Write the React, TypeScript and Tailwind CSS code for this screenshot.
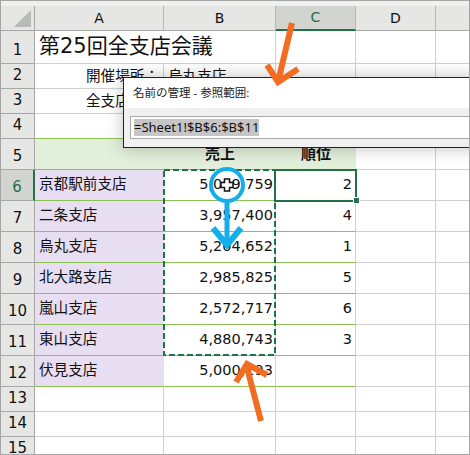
const rowHeights = [33, 25, 25, 25, 31, 31, 31, 31, 31, 31, 31, 31, 25, 25, 25];

const cells: Record<number, { a?: string; b?: string; c?: string }> = {
  6: { a: "京都駅前支店", b: "5,009,759", c: "2" },
  7: { a: "二条支店", b: "3,957,400", c: "4" },
  8: { a: "烏丸支店", b: "5,204,652", c: "1" },
  9: { a: "北大路支店", b: "2,985,825", c: "5" },
  10: { a: "嵐山支店", b: "2,572,717", c: "6" },
  11: { a: "東山支店", b: "4,880,743", c: "3" },
  12: { a: "伏見支店", b: "5,000,193" },
};

function ColHead({ label, active, w }: { label: string; active?: boolean; w: string }) {
  return (
    <div
      className={`${w} h-[25px] shrink-0 flex items-center justify-center border-r border-[#b5b7b5] text-[14px] ${
        active ? "bg-[#d2d4d0] text-[#1f6f4a] border-b-[2px] border-b-[#217346]" : "bg-[#e6e7e5] border-b border-b-[#a6a8a6]"
      }`}
    >
      {label}
    </div>
  );
}

function Row({ n }: { n: number }) {
  const h = rowHeights[n - 1];
  const data = cells[n];
  const rowBorder = n >= 4 && n <= 12 ? "border-b-[#8cc152]" : "border-b-[#d0d0d0]";
  const numCell = "flex items-end justify-center pb-[2px] border-r border-[#a6a8a6] border-b border-b-[#a6a8a6] text-[15px] w-[34px] shrink-0";
  const selectedRow = n === 6;

  if (n === 5) {
    return (
      <div className="flex" style={{ height: h }}>
        <div className={`${numCell} bg-[#e6e7e5]`}>5</div>
        <div className="w-[129px] shrink-0 border-b border-b-[#8cc152] bg-[#e2efda]" />
        <div className="w-[112px] shrink-0 border-b border-b-[#8cc152] bg-[#e2efda] flex items-center justify-center text-[15px] font-bold">
          売上
        </div>
        <div className="w-[80px] shrink-0 border-b border-b-[#8cc152] bg-[#e2efda] flex items-center justify-center text-[15px] font-bold">
          順位
        </div>
        <div className="w-[80px] shrink-0 border-r border-b border-[#d0d0d0]" />
        <div className="flex-1 border-b border-[#d0d0d0]" />
      </div>
    );
  }

  return (
    <div className="flex" style={{ height: h }}>
      <div className={`${numCell} ${selectedRow ? "bg-[#d2d4d0] text-[#1f6f4a] border-r-[2px] border-r-[#217346]" : "bg-[#e6e7e5]"}`}>{n}</div>
      {n === 1 ? (
        <div className={`w-[129px] shrink-0 border-b ${rowBorder} relative`}>
          <span className="absolute left-[4px] top-[-1px] text-[21px] whitespace-nowrap leading-[32px]">第25回全支店会議</span>
        </div>
      ) : n === 2 || n === 3 ? (
        <div className={`w-[129px] shrink-0 border-r border-[#d0d0d0] border-b ${rowBorder} flex items-center justify-end pr-[4px] text-[14.6px] whitespace-nowrap`}>
          {n === 2 ? "開催場所：" : "全支店数："}
        </div>
      ) : (
        <div className={`w-[129px] shrink-0 border-r border-b ${rowBorder} flex items-center pl-[4px] pb-[2px] text-[14.6px] whitespace-nowrap ${data?.a ? "bg-[#e8def2] border-r-[#e8def2]" : "border-r-[#d0d0d0]"}`}>
          {data?.a}
        </div>
      )}
      <div className={`w-[112px] shrink-0 border-r border-r-[#d0d0d0] border-b ${rowBorder} flex items-center justify-end pr-[2px] text-[14.5px]`}>
        {n === 2 ? <span className="w-full pl-[4px] text-[14.6px]">烏丸支店</span> : data?.b}
      </div>
      <div className={`w-[80px] shrink-0 border-r border-r-[#d0d0d0] border-b ${rowBorder} flex items-center justify-end pr-[3px] text-[14.5px]`}>
        {data?.c}
      </div>
      <div className="w-[80px] shrink-0 border-r border-r-[#d0d0d0] border-b border-b-[#d0d0d0]" />
      <div className="flex-1 border-b border-b-[#d0d0d0]" />
    </div>
  );
}

export default function App() {
  return (
    <div
      className="relative w-[470px] h-[455px] overflow-hidden bg-white text-[#111] border border-[#a6a6a6]"
      style={{ fontFamily: '"DejaVu Sans", "Noto Sans CJK JP", sans-serif' }}
    >
      <div className="h-[5px] bg-[#f0f1ef]" />
      <div className="flex">
        <div className="w-[34px] h-[25px] shrink-0 bg-[#e6e7e5] border-r border-b border-[#a6a8a6] relative">
          <svg className="absolute right-[3px] bottom-[3px]" width="17" height="17" viewBox="0 0 17 17">
            <polygon points="17,0 17,17 0,17" fill="#b8bab8" />
          </svg>
        </div>
        <ColHead label="A" w="w-[129px]" />
        <ColHead label="B" w="w-[112px]" />
        <ColHead label="C" w="w-[80px]" active />
        <ColHead label="D" w="w-[80px]" />
        <div className="flex-1 h-[25px] bg-[#e6e7e5] border-b border-[#a6a8a6]" />
      </div>
      {rowHeights.map((_, i) => (
        <Row key={i} n={i + 1} />
      ))}

      {/* active cell C6 */}
      <div className="absolute left-[273px] top-[168px] w-[83px] h-[33px] border-[2px] border-[#217346]" />
      <div className="absolute left-[352px] top-[196px] w-[7px] h-[7px] bg-[#217346] border border-white" />

      {/* name manager dialog */}
      <div
        className="absolute left-[122px] top-[76px] w-[360px] h-[71px] bg-[#eff0ef] border border-[#222] shadow-[0_0_16px_rgba(0,0,0,0.25)]"
        style={{ fontFamily: '"Noto Sans", "Noto Sans CJK JP", sans-serif' }}
      >
        <div className="h-[30px] bg-white pl-[9px] flex items-center text-[11.5px] text-[#222]">名前の管理 - 参照範囲:</div>
        <div className="mt-[8px] ml-[6px] h-[23px] bg-white border border-[#ababab] flex items-center px-[3px] text-[13px]">
          <span className="bg-[#c6c6c6] leading-[17px]">=Sheet1!$B$6:$B$11</span>
        </div>
      </div>

      {/* annotations, marching ants B6:B11 */}
      <svg className="absolute left-[-1px] top-[-1px]" width="470" height="455" viewBox="0 0 470 455">
        <rect x="164" y="170" width="111" height="185" fill="none" stroke="#217346" strokeWidth="2" strokeDasharray="6 3" />
        <g fill="none" stroke="#f26c21" strokeWidth="6">
          <path d="M292 23 L278 82" />
          <path d="M267 65 L278 82 L298 69" />
          <path d="M261 421 L246 364" />
          <path d="M236 382 L247 364 L267 375" />
        </g>
        <g fill="none" stroke="#14aeea">
          <circle cx="227" cy="185" r="16" strokeWidth="4" />
          <path d="M227 201 L227 246" strokeWidth="5" />
          <path d="M213 228 L227 245 L241 228" strokeWidth="6" />
        </g>
        <path
          d="M224.5 179 h5 v3.5 h3.5 v5 h-3.5 v3.5 h-5 v-3.5 h-3.5 v-5 h3.5 z"
          fill="#fff"
          stroke="#111"
          strokeWidth="1.5"
        />
      </svg>
    </div>
  );
}
